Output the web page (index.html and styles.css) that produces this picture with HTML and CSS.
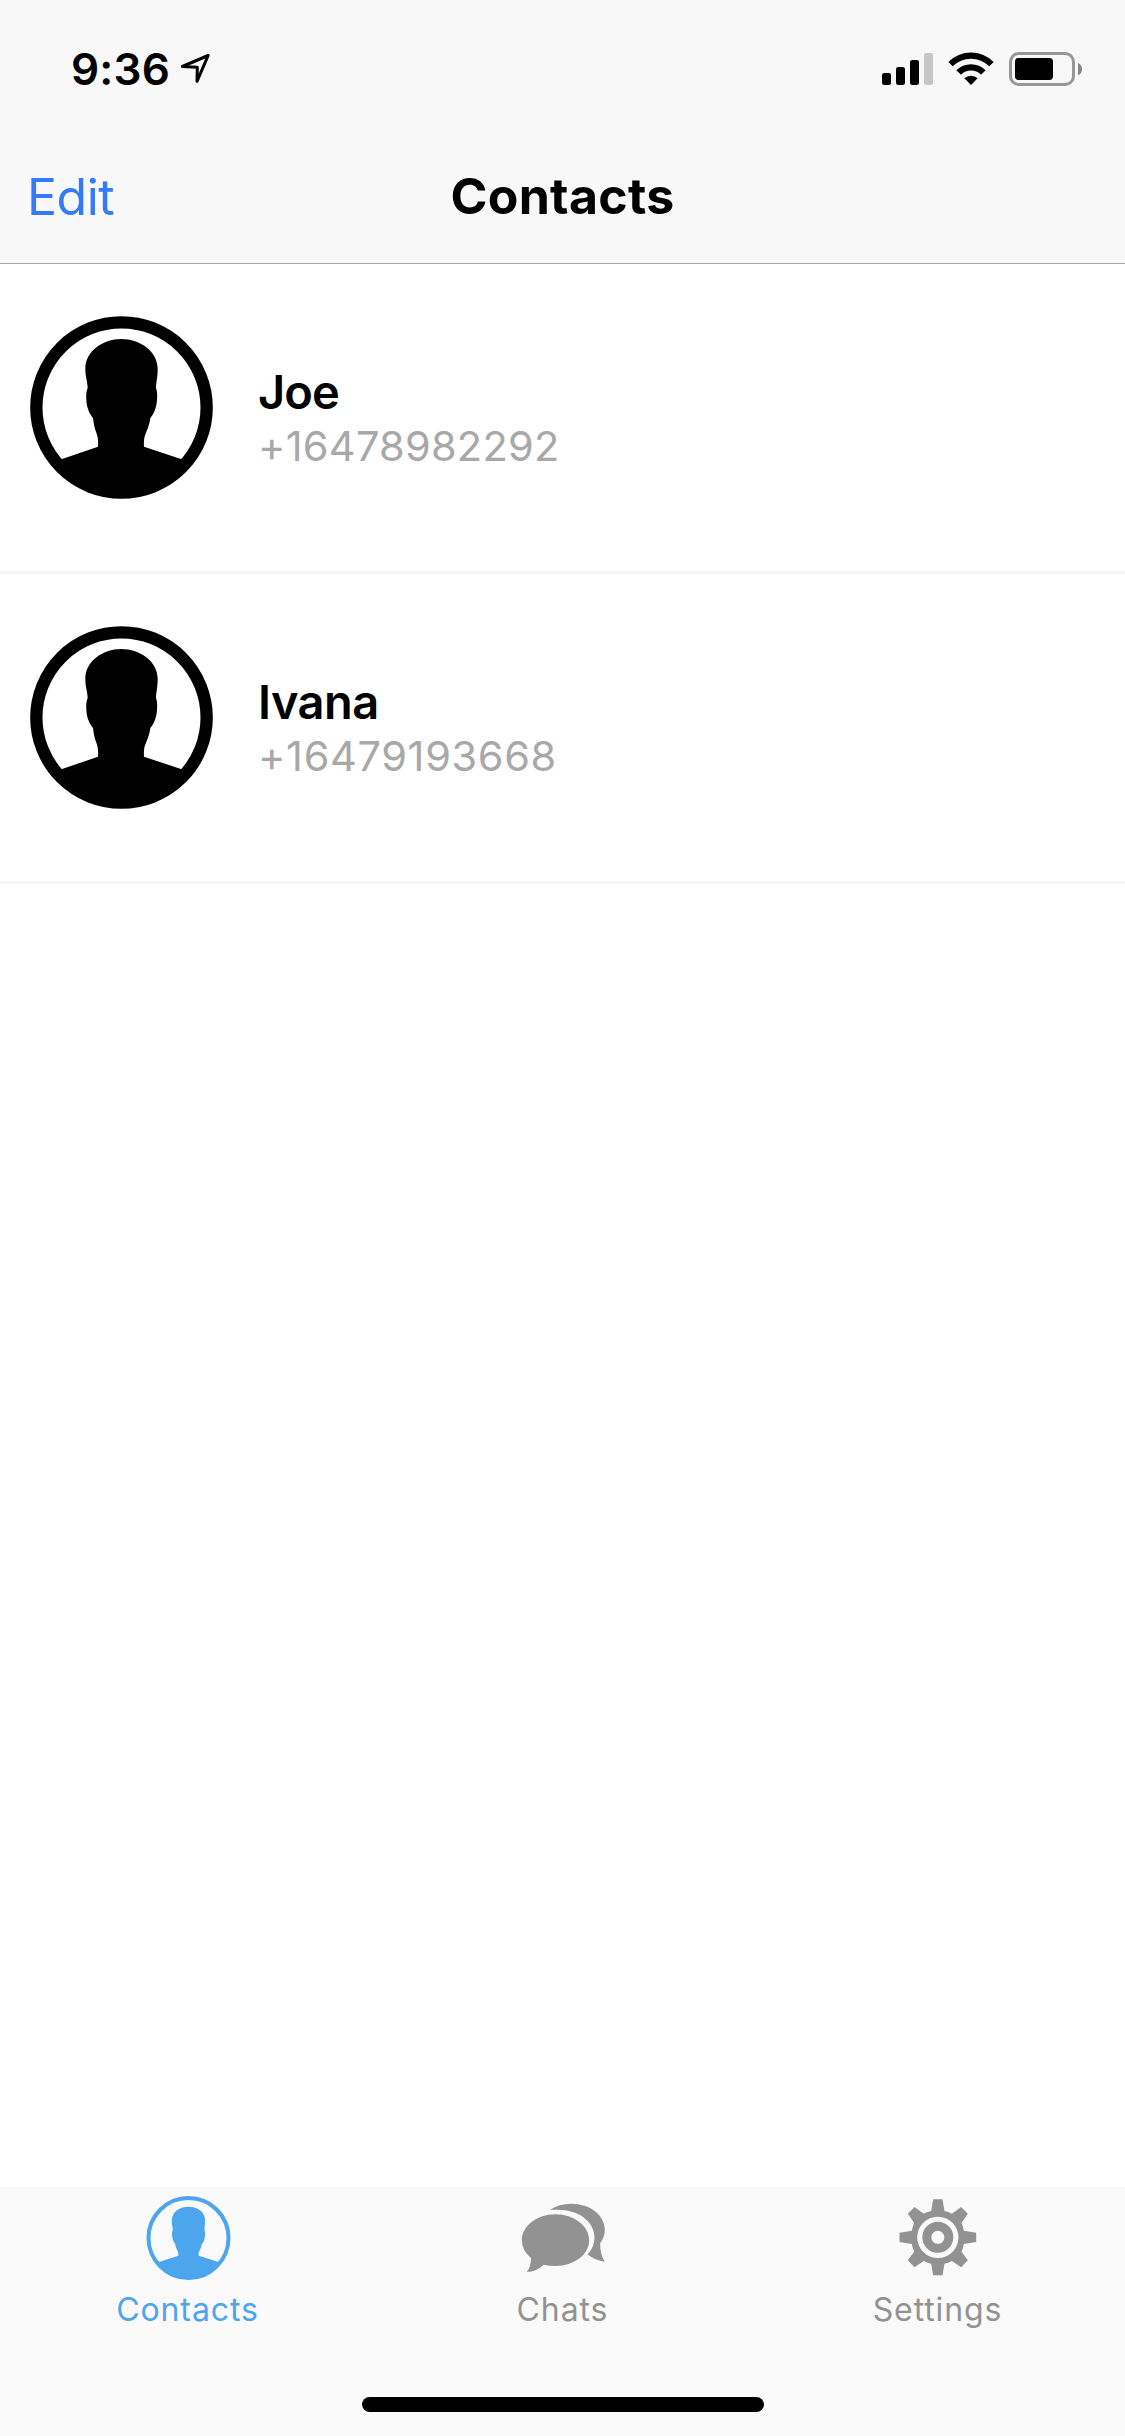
FILE: index.html
```html
<!DOCTYPE html>
<html lang="en">
<head>
<meta charset="utf-8">
<title>Contacts</title>
<link rel="stylesheet" href="styles.css">
</head>
<body>
<svg class="defs" width="0" height="0" aria-hidden="true">
  <symbol id="avatar" viewBox="60 48 549 549">
    <circle cx="334.500" cy="322.500" r="255.500" fill="none" stroke="currentColor" stroke-width="37"/>
    <path fill="currentColor" d="M334 117C391 117 443 155 443 206C443 232 439 240 438 264C442 275 442 285 441 298C440 322 432 342 421 354C418 376 413 386 408 398C402 412 401 422 402 440L515 478L530 490A255 255 0 0 1 139 490L154 478L264 440C265 422 264 412 259 398C254 385 251 372 249 354C238 342 229 320 229 298C228 285 229 275 233 264C232 240 226 232 226 206C226 155 277 117 334 117Z"/>
  </symbol>
</svg>
<div class="screen">
  <header class="header">
    <div class="status">
      <span class="time">9:36</span>
      <svg class="location" viewBox="540 69 93 93"><path d="M624.500 76.500L547 109.500L592 111.500L591 154Z" fill="none" stroke="#000" stroke-width="9" stroke-linejoin="round"/></svg>
      <svg class="indicators" viewBox="66 66 603 102">
        <rect x="66" y="129" width="27" height="36" rx="7"/>
        <rect x="108" y="111" width="27" height="54" rx="7"/>
        <rect x="150" y="90" width="27" height="75" rx="7"/>
        <rect x="192" y="69" width="27" height="96" rx="7" fill="#c6c6c6"/>
        <path d="M265 96A96 96 0 0 1 401 96L388 109A77 77 0 0 0 278 109Z"/>
        <path d="M289 121A62 62 0 0 1 377 121L363 134A43 43 0 0 0 303 134Z"/>
        <path d="M313 145A29 29 0 0 1 353 145L333 165Z"/>
        <rect x="451.500" y="70.500" width="189" height="93" rx="25" fill="none" stroke="#979797" stroke-width="9"/>
        <rect x="465" y="84" width="114" height="66" rx="11"/>
        <path d="M654 98Q666 104 666 117.500Q666 131 654 136Z" fill="#868686"/>
      </svg>
    </div>
    <nav class="nav">
      <a class="edit">Edit</a>
      <h1 class="title">Contacts</h1>
    </nav>
  </header>
  <main class="list">
    <article class="row">
      <svg class="avatar"><use href="#avatar"/></svg>
      <div class="info"><div class="name joe">Joe</div><div class="phone">+16478982292</div></div>
    </article>
    <article class="row">
      <svg class="avatar"><use href="#avatar"/></svg>
      <div class="info"><div class="name ivana">Ivana</div><div class="phone wide">+16479193668</div></div>
    </article>
  </main>
  <footer class="tabbar">
    <div class="tabs">
      <a class="tab active">
        <svg class="icon" viewBox="157.500 39 270 270">
          <circle cx="297" cy="174" r="120" fill="none" stroke="currentColor" stroke-width="12"/>
          <path fill="currentColor" d="M297 80C326 80 347 97 347 121C347 133 345 140 345 150C348 156 347 165 346 170C345 180 341 188 337 192C335 205 330 211 328 217C327 220 327 224 328 227L387 246L393 248A120 120 0 0 1 201 248L209 246L266 227C267 222 266 217 264 212C261 205 258 200 257 191C252 186 249 178 248 168C247 160 247 156 250 150C249 140 247 133 247 121C247 97 268 80 297 80Z"/>
        </svg>
        <span class="label">Contacts</span>
      </a>
      <a class="tab">
        <svg class="icon" viewBox="82.500 39 270 270" fill="currentColor">
          <path d="M198 103C254 103 299 138 299 181C299 224 254 258 198 258Q179 258 162 254Q143 274 112 276Q124 262 125 235Q97 212 97 181C97 138 142 103 198 103Z"/>
          <path d="M181 90C200 77 221 71 245 71C301 71 346 105 346 149Q346 171 332 190Q332 226 346 245Q318 243 294 223Q315 201 315 173C315 122 263 82 181 90Z"/>
        </svg>
        <span class="label">Chats</span>
      </a>
      <a class="tab">
        <svg class="icon" viewBox="127.500 39 270 270" fill="currentColor">
          <path fill-rule="evenodd" d="M251 58H279L285 93Q297 95 307 101L335 81L355 101L336 129Q341 140 343 152L380 158V186L343 192Q341 204 336 215L355 241L335 262L307 243Q297 249 285 251L279 286H251L245 251Q234 249 223 243L195 262L175 241L194 215Q189 204 187 192L150 186V158L187 152Q189 140 194 129L175 101L195 81L223 101Q234 95 245 93ZM265 110a62 62 0 1 0 0 124a62 62 0 1 0 0-124Z"/>
          <circle cx="265" cy="172" r="33" fill="none" stroke="currentColor" stroke-width="27"/>
        </svg>
        <span class="label">Settings</span>
      </a>
    </div>
    <div class="home"></div>
  </footer>
</div>
</body>
</html>
```
FILE: styles.css
```css
* { box-sizing: border-box; }

body {
  margin: 0;
  background: #fff;
  color: #000;
  font-family: Inter, "Liberation Sans", sans-serif;
}

.defs { display: block; height: 0; }

.screen {
  display: flex;
  flex-direction: column;
  width: 1125px;
  height: 2436px;
}

.header {
  height: 264px;
  background: #f8f8f8;
  border-bottom: 1px solid #a7a7a7;
}

.status {
  display: flex;
  align-items: flex-start;
  height: 132px;
  padding: 39px 42px 0 71px;
}

.time {
  width: 109px;
  font-size: 44px;
  font-weight: 600;
  line-height: 60px;
  letter-spacing: 0.2px;
  white-space: nowrap;
}

.location { width: 31px; height: 31px; margin-top: 14px; }

.indicators {
  width: 201px;
  height: 34px;
  margin: 13px 0 0 auto;
}

.nav {
  display: grid;
  grid-template-columns: 1fr auto 1fr;
  height: 131px;
  padding: 0 27px;
}

.edit {
  color: #357af6;
  font-size: 50px;
  line-height: 130px;
  letter-spacing: -0.5px;
}

.title {
  margin: 0;
  font-size: 50px;
  font-weight: 700;
  line-height: 128px;
  letter-spacing: 0.3px;
}

.list { flex: 1; }

.row {
  display: flex;
  gap: 45px;
  height: 310px;
  padding: 52px 30px 0;
  border-bottom: 3px solid #f5f5f5;
}

.avatar { width: 183px; height: 183px; }

.info { padding-top: 48px; }

.name {
  font-size: 47px;
  font-weight: 600;
  line-height: 56px;
}

.joe { letter-spacing: -0.9px; }

.ivana { letter-spacing: -0.5px; }

.phone {
  color: #a8a8a8;
  font-size: 41.5px;
  line-height: 52px;
  letter-spacing: 0.25px;
}

.phone.wide { letter-spacing: 0.65px; }

.tabbar {
  display: flex;
  flex-direction: column;
  align-items: center;
  height: 249px;
  padding-top: 6px;
  background: #fafafa;
}

.tabs {
  display: grid;
  grid-template-columns: repeat(3, 1fr);
  width: 100%;
}

.tab {
  display: flex;
  flex-direction: column;
  align-items: center;
  color: #929292;
}

.tab.active { color: #4da5ee; }

.icon { width: 90px; height: 90px; margin-left: -1px; }

.label {
  margin-top: 7px;
  font-size: 32px;
  line-height: 40px;
  letter-spacing: 0.9px;
}

.home {
  width: 402px;
  height: 15px;
  margin: auto 0 24px;
  border-radius: 8px;
  background: #000;
}
```
